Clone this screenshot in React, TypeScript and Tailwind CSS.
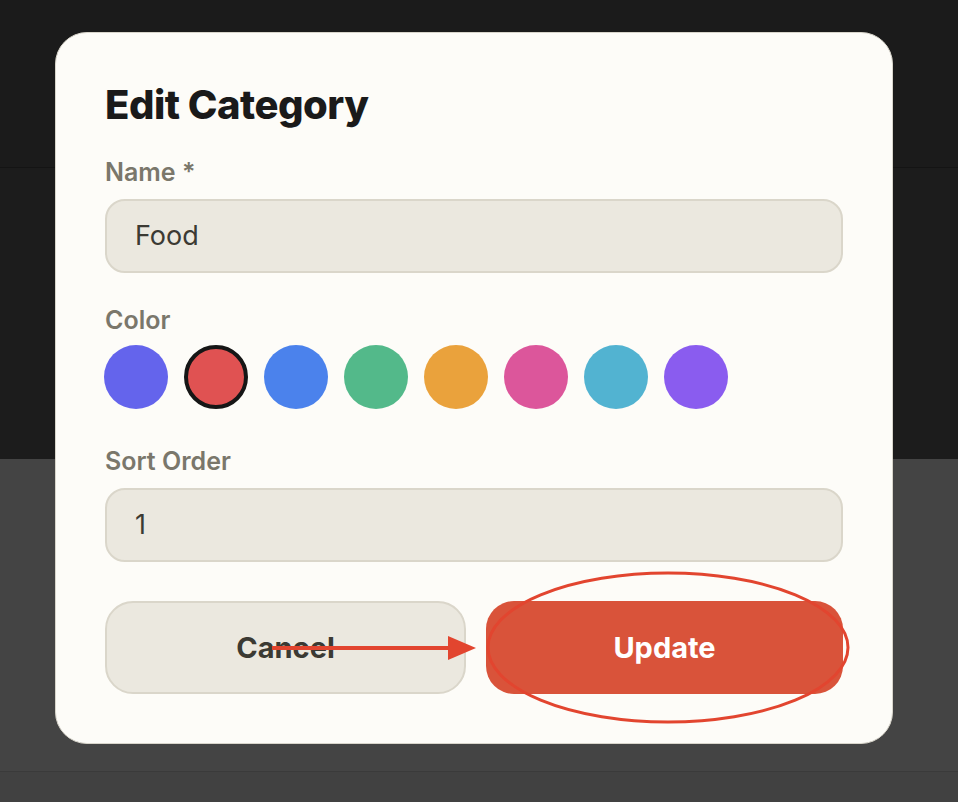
const swatches = [
  { color: "#6464ec", selected: false },
  { color: "#e05252", selected: true },
  { color: "#4b82ec", selected: false },
  { color: "#53b98a", selected: false },
  { color: "#eaa23c", selected: false },
  { color: "#dc569b", selected: false },
  { color: "#52b3d1", selected: false },
  { color: "#8a5cef", selected: false },
];

const Label = ({ children, mt }: { children: React.ReactNode; mt: string }) => (
  <div className={`${mt} text-[25px] leading-[32px] font-semibold text-[#7a776b]`}>{children}</div>
);

export default function App() {
  return (
    <div
      className="relative w-full h-[802px] overflow-hidden"
      style={{ fontFamily: "Inter, 'Noto Sans', sans-serif" }}
    >
      {/* backdrop bands */}
      <div className="h-[168px] bg-[#1b1b1b] border-b border-[#141414]" />
      <div className="h-[291px] bg-[#1c1c1c]" />
      <div className="h-[313px] bg-[#444444] border-b border-[#3a3a3a]" />
      <div className="h-[30px] bg-[#414141]" />

      {/* Modal */}
      <div className="absolute left-[55px] top-[32px] w-[838px] h-[712px] rounded-[32px] bg-[#fdfcf8] border border-[#d8d5cb] px-[49px] pt-[48px]">
        <h2 className="text-[40px] leading-[48px] font-extrabold tracking-[-0.5px] text-[#1a1a1a]">Edit Category</h2>

        <Label mt="mt-[27px]">Name *</Label>
        <div className="mt-[11px] h-[74px] rounded-[20px] bg-[#ebe8df] border-2 border-[#dad6ca] flex items-center pl-[28px] text-[27px] text-[#3b3a33]">
          Food
        </div>

        <Label mt="mt-[31px]">Color</Label>
        <div className="mt-[9px] -ml-px flex gap-[16px]">
          {swatches.map((s) => (
            <div
              key={s.color}
              className={`w-[64px] h-[64px] rounded-full ${s.selected ? "border-[4px] border-[#161616]" : ""}`}
              style={{ backgroundColor: s.color }}
            />
          ))}
        </div>

        <Label mt="mt-[36px]">Sort Order</Label>
        <div className="mt-[11px] h-[74px] rounded-[20px] bg-[#ebe8df] border-2 border-[#dad6ca] flex items-center pl-[28px] text-[27px] text-[#3b3a33]">
          1
        </div>

        <div className="mt-[39px] flex gap-[20px]">
          <button className="flex-1 h-[93px] rounded-[28px] bg-[#ebe8df] border-2 border-[#dad6ca] text-[29px] font-bold text-[#3b3a33]">
            Cancel
          </button>
          <button className="flex-1 h-[93px] rounded-[28px] bg-[#d9533a] text-[29px] font-bold text-white">
            Update
          </button>
        </div>
      </div>

      {/* annotation overlay */}
      <svg className="absolute left-0 top-0 pointer-events-none" width="958" height="802" viewBox="0 0 958 802">
        <line x1="272" y1="648" x2="452" y2="648" stroke="#e2452f" strokeWidth="4" />
        <polygon points="448,636 476,648 448,660" fill="#e2452f" />
        <ellipse cx="668" cy="647.5" rx="180" ry="74.5" fill="none" stroke="#e2452f" strokeWidth="3" />
      </svg>
    </div>
  );
}
